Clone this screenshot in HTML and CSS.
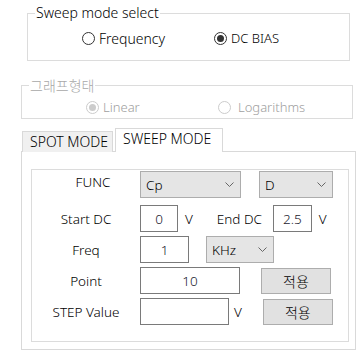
FILE: index.html
```html
<!doctype html>
<html lang="ko">
	<head>
		<meta charset="UTF-8">
		<title>Sweep</title>
		<link rel="stylesheet" href="styles.css">
	</head>
	<body>
		<fieldset class="grp sweep">
			<legend>Sweep mode select</legend>
			<div class="radios">
				<label class="rad"><input type="radio" name="mode"> Frequency</label>
				<label class="rad"><input type="radio" name="mode" checked> DC BIAS</label>
			</div>
		</fieldset>

		<fieldset class="grp graph" disabled>
			<legend>그래프형태</legend>
			<div class="radios">
				<label class="rad"><input type="radio" name="g" checked> Linear</label>
				<label class="rad"><input type="radio" name="g"> Logarithms</label>
			</div>
		</fieldset>

		<div class="tabs">
			<div class="tab">SPOT MODE</div>
			<div class="tab sel">SWEEP MODE</div>
		</div>
		<div class="panel">
			<div class="box">
				<div class="row r1">
					<span class="lbl">FUNC</span>
					<div class="combo w101">Cp<svg width="9" height="5" viewBox="0 0 9 5"><path d="M0.5 0.5 L4.5 4.5 L8.5 0.5" fill="none" stroke="#666" stroke-width="1"/></svg></div>
					<div class="combo w74 ml18">D<svg width="9" height="5" viewBox="0 0 9 5"><path d="M0.5 0.5 L4.5 4.5 L8.5 0.5" fill="none" stroke="#666" stroke-width="1"/></svg></div>
				</div>
				<div class="row">
					<span class="lbl">Start DC</span>
					<input class="txt w38" value="0">
					<span class="unit">V</span>
					<span class="lbl2">End DC</span>
					<input class="txt w39" value="2.5">
					<span class="unit">V</span>
				</div>
				<div class="row">
					<span class="lbl">Freq</span>
					<input class="txt w49" value="1">
					<div class="combo w68 ml17">KHz<svg width="9" height="5" viewBox="0 0 9 5"><path d="M0.5 0.5 L4.5 4.5 L8.5 0.5" fill="none" stroke="#666" stroke-width="1"/></svg></div>
				</div>
				<div class="row">
					<span class="lbl">Point</span>
					<input class="txt w100" value="10">
					<button class="btn ml21">적용</button>
				</div>
				<div class="row">
					<span class="lbl">STEP Value</span>
					<input class="txt w89" value="">
					<span class="unit u5">V</span>
					<button class="btn ml21">적용</button>
				</div>
			</div>
		</div>
	</body>
</html>
```

FILE: styles.css
```css
* {
	box-sizing: border-box;
}
body {
	margin: 0;
	background: #fff;
	font-family: "Noto Sans", "Noto Sans CJK KR", sans-serif;
	font-weight: 300;
	font-size: 14px;
	color: #000;
	width: 364px;
	height: 360px;
	overflow: hidden;
}
.grp {
	border: 1px solid #dcdcdc;
	padding: 0;
	margin: 0;
	min-width: 0;
}
.grp legend {
	padding: 0 1px;
	margin-left: 7px;
	line-height: 16px;
}
.sweep {
	margin: 5px 14px 0 27px;
	height: 56px;
}
.graph {
	margin: 16px 11px 0 21px;
	height: 42px;
}
.graph legend {
	font-family: "Noto Sans CJK KR", sans-serif;
	font-size: 14px;
	color: #a8a8a8;
	margin-left: 7px;
}
.radios {
	display: grid;
	grid-template-columns: 132px auto;
	height: 20px;
	align-items: center;
}
.sweep .radios {
	margin: 7px 0 0 54px;
}
.graph .radios {
	margin: 4px 0 0 64px;
}
.rad {
	display: flex;
	align-items: center;
	gap: 4px;
	font-size: 13px;
}
.sweep .rad:first-child {
	font-size: 14px;
}
.rad input {
	appearance: none;
	margin: 0;
	width: 13px;
	height: 13px;
	border: 1px solid #333;
	border-radius: 50%;
	display: grid;
	place-items: center;
	background: #fff;
}
.rad input:checked::after {
	content: "";
	width: 7px;
	height: 7px;
	border-radius: 50%;
	background: #333;
}
.graph .rad {
	color: #a0a0a0;
}
.graph .rad input {
	border-color: #ccc;
}
.graph .rad input:checked::after {
	background: #ccc;
}
.graph .rad:last-child {
	gap: 7px;
}

.tabs {
	display: flex;
	align-items: flex-end;
	margin: 9px 0 0 22px;
	height: 24px;
	font-size: 14px;
	position: relative;
	z-index: 1;
}
.tab {
	height: 21px;
	padding: 0 0 0 7px;
	width: 91px;
	background: #f0f0f0;
	border: 1px solid #d9d9d9;
	border-bottom: none;
	line-height: 19px;
}
.tab.sel {
	height: 24px;
	width: 108px;
	margin-left: 2px;
	background: #fff;
	padding-left: 7px;
	line-height: 20px;
}
.panel {
	margin: -1px 8px 0 21px;
	height: 199px;
	border: 1px solid #d9d9d9;
	padding: 17px 6px 0 9px;
}
.box {
	border: 1px solid #dcdcdc;
	height: 173px;
	padding-top: 1px;
	font-size: 13.5px;
}
.row {
	display: flex;
	align-items: center;
	height: 27px;
	margin-bottom: 4px;
}
.r1 {
	margin-bottom: 7px;
	align-items: flex-start;
}
.lbl {
	width: 108px;
	text-align: center;
}
.r1 .lbl {
	line-height: 22px;
	padding-left: 14px;
}
.lbl2 {
	margin-left: 24px;
	width: 56px;
}
.unit {
	margin-left: 7px;
}
.u5 {
	margin-left: 5px;
}
.combo {
	height: 27px;
	background: #e5e5e5;
	border: 1px solid #adadad;
	display: flex;
	align-items: center;
	justify-content: space-between;
	padding: 0 6px 0 5px;
}
.txt {
	height: 27px;
	border: 1px solid #7a7a7a;
	text-align: center;
	font: inherit;
	color: #1a1a2e;
	padding: 0;
	background: #fff;
}
.btn {
	width: 70px;
	height: 26px;
	background: #e1e1e1;
	border: 1px solid #adadad;
	font-family: "Noto Sans CJK KR", sans-serif;
	font-weight: 300;
	font-size: 14px;
	color: #000;
	padding: 0;
}
.w101 { width: 101px; }
.w74 { width: 74px; }
.w68 { width: 68px; }
.w38 { width: 38px; }
.w39 { width: 39px; }
.w49 { width: 49px; }
.w100 { width: 100px; }
.w89 { width: 89px; }
.ml18 { margin-left: 18px; }
.ml17 { margin-left: 17px; }
.ml21 { margin-left: 21px; }
```
